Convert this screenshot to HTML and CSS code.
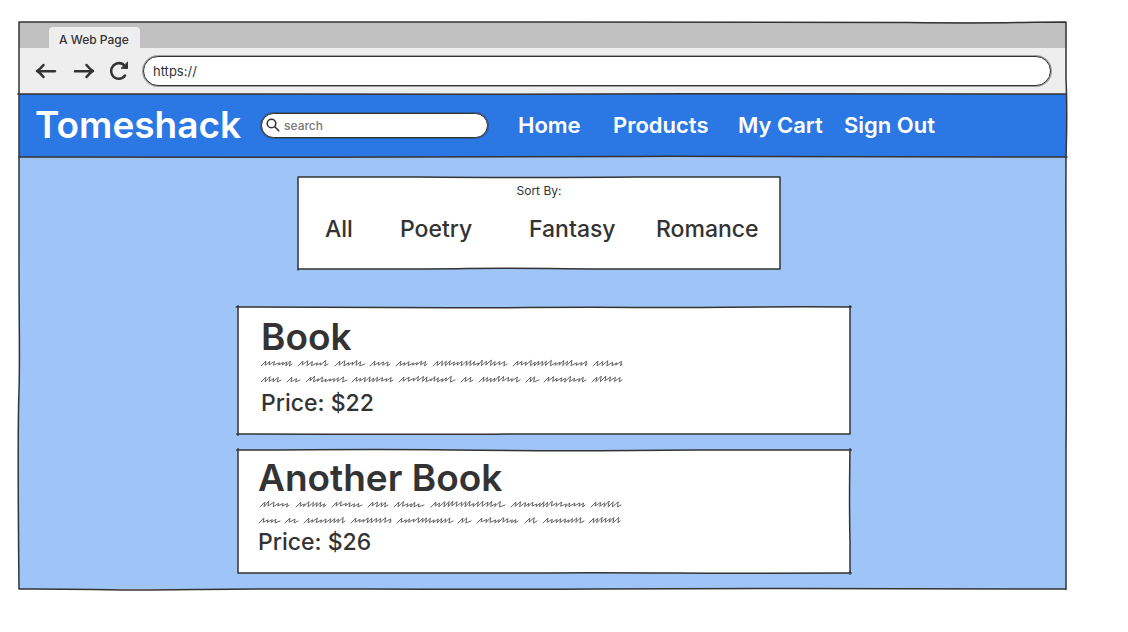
FILE: index.html
```html
<!DOCTYPE html>
<html lang="en">
<head>
<meta charset="utf-8">
<meta name="viewport" content="width=device-width, initial-scale=1">
<title>Tomeshack</title>
<link rel="stylesheet" href="styles.css">
</head>
<body>
<div class="window">
  <div class="tabs"><div class="tab">A Web Page</div></div>
  <div class="toolbar">
    <button class="tool" type="button" aria-label="Back"><svg width="22" height="18" viewBox="0 0 22 18"><path d="M20 9.3L2 9M8.500 3C6.500 5.500 4.500 7.500 2 9C4.500 10.500 6.500 12.500 8.500 15"/></svg></button>
    <button class="tool" type="button" aria-label="Forward"><svg width="22" height="18" viewBox="0 0 22 18"><path d="M2 9.300L20 9M13.500 3C15.500 5.500 17.500 7.500 20 9C17.500 10.500 15.500 12.500 13.500 15"/></svg></button>
    <button class="tool" type="button" aria-label="Reload"><svg width="20" height="20" viewBox="0 0 20 20"><path d="M16 14.500C13 19 5.500 19 3 13.500C1 9 3 4 7.500 2.500C11 1.500 14.500 3 16.500 6"/><path class="solid" d="M18.500 1.500L18.500 7.500L12.500 7.200Z"/></svg></button>
    <input class="address" type="text" aria-label="Address" value="https://">
  </div>
  <header class="header">
    <h1 class="brand">Tomeshack</h1>
    <label class="search">
      <svg width="14" height="14" viewBox="0 0 14 14" aria-hidden="true"><circle cx="5.500" cy="5.500" r="4.300"/><path d="M8.800 8.800L12.800 12.800"/></svg>
      <input type="search" placeholder="search" aria-label="Search">
    </label>
    <nav class="nav">
      <a href="#">Home</a><a href="#">Products</a><a href="#">My Cart</a><a href="#">Sign Out</a>
    </nav>
    <svg class="frame" viewBox="0 0 100 100" preserveAspectRatio="none" aria-hidden="true"><path d="M-.1 0L15 0C30 -1 42 1 55 0S75 0 100 0M0 100C15 100 25 101 37 100S55 100 62 99S80 100 100.100 100"/></svg>
  </header>
  <main class="main">
    <section class="filter">
      <h2 class="filter-title">Sort By:</h2>
      <div class="filter-links"><a href="#">All</a><a href="#">Poetry</a><a href="#">Fantasy</a><a href="#">Romance</a></div>
      <svg class="frame" viewBox="0 0 100 100" preserveAspectRatio="none" aria-hidden="true"><path d="M0 0L25 0C45 .8 60 .5 70 0L100 0M100 0L100 100M0 100C12 100 22 100.500 35 99.500S60 100.500 80 100L100 100M0 0L0 101"/></svg>
    </section>
    <article class="book">
      <h2 class="book-title">Book</h2>
      <svg class="scribble" width="364" height="28" viewBox="0 0 364 28" aria-hidden="true" data-rows="0-31 37-67 74-104 109-129 135-166 172-246 252-326 332-361|0-20 26-39 45-86 91-132 138-194 200-212 218-259 265-278 283-325 331-361"></svg>
      <p class="price">Price: $22</p>
      <svg class="frame" viewBox="0 0 100 100" preserveAspectRatio="none" aria-hidden="true"><path d="M-.3 0C15 0 25 0 35 .5S50 -.3 65 .3S80 -.6 100.200 0M100 -1L100 100M100 100C75 100 60 99.300 45 100S20 100 -.2 100M0 -1L0 101"/></svg>
    </article>
    <article class="book compact">
      <h2 class="book-title">Another Book</h2>
      <svg class="scribble" width="364" height="28" viewBox="0 0 364 28" aria-hidden="true" data-rows="2-31 38-68 74-104 110-130 136-166 173-247 253-327 333-363|1-22 27-40 46-87 93-133 139-195 200-213 219-260 267-279 285-326 331-362"></svg>
      <p class="price">Price: $26</p>
      <svg class="frame" viewBox="0 0 100 100" preserveAspectRatio="none" aria-hidden="true"><path d="M-.2 0C12 0 22 -.8 35 0S60 .8 75 0L100.200 0M100 -1C99.900 30 99.900 55 100 75L100 101M0 100L50 100C65 99.500 75 100.500 85 100.200L100.200 100M0 -1L0 100"/></svg>
    </article>
  </main>
  <svg class="frame" viewBox="0 0 100 100" preserveAspectRatio="none" aria-hidden="true"><path d="M0 0C20 0 35 .1 50 0S75 -.1 85 .1S95 0 100 0M100 0L100 10C100.100 14 100.100 18 100 24C99.950 45 100.100 60 100 75L100 100.100M100 100C80 100 72 99.800 55 100S25 99.800 17 100.100S7 99.900 0 100M0 0L0 40C0 55 .1 60 0 65S-.1 82 0 100"/></svg>
</div>
<script src="scribble.js"></script>
</body>
</html>
```
FILE: styles.css
```css
* { box-sizing: border-box; }
body {
  margin: 0;
  padding: 22px 62px 43px 19px;
  background: #fff;
  color: #333;
  font-family: Inter, "Open Sans", sans-serif;
}
h1, h2, p { margin: 0; font-weight: 500; }
a { color: inherit; text-decoration: none; }
svg { display: block; flex: none; fill: none; stroke: #333; stroke-linecap: round; stroke-linejoin: round; }
.window { position: relative; background: #eee; }
.frame {
  position: absolute;
  inset: 0;
  width: 100%;
  height: 100%;
  overflow: visible;
  pointer-events: none;
}
.frame path { vector-effect: non-scaling-stroke; stroke-width: 1.5; }
.tabs { display: flex; align-items: flex-end; height: 26px; padding-left: 30px; background: #c1c1c1; }
.tab {
  height: 21px;
  padding: 0 11px 0 10px;
  border-radius: 4px 4px 0 0;
  background: #eee;
  font-size: 12px;
  font-weight: 500;
  line-height: 25px;
}
.toolbar { display: flex; align-items: center; gap: 16px; height: 46px; padding: 0 15px 0 16px; }
.tool { padding: 0; border: 0; background: none; }
.tool svg { stroke-width: 2.5; }
.tool .solid { fill: #333; stroke-width: 1; }
.tool:nth-child(3) { margin: 0 -2px; }
.address {
  flex: 1;
  min-width: 0;
  height: 30px;
  padding: 0 9px;
  border: 1px solid #333;
  border-radius: 15px;
  box-shadow: 0 0 0 1px #3336;
  background: #fff;
  color: #333;
  font: 13px Inter, "Open Sans", sans-serif;
}
.header {
  position: relative;
  display: flex;
  align-items: center;
  height: 63px;
  padding: 0 16px 1px;
  background: #2b78e4;
  color: #fff;
}
.brand { flex: 0 0 226px; font-size: 37px; font-weight: 600; line-height: 48px; }
.search {
  display: flex;
  align-items: center;
  gap: 4px;
  width: 227px;
  height: 25px;
  margin-right: 30px;
  padding: 0 4px;
  border: 1px solid #333;
  border-radius: 13px;
  box-shadow: 0 0 0 1px #3336;
  background: #fff;
}
.search svg { stroke-width: 1.6; }
.search input {
  flex: 1;
  min-width: 0;
  padding: 0;
  border: 0;
  outline: 0;
  background: none;
  font: 500 12px Inter, "Open Sans", sans-serif;
}
.search input::placeholder { color: #777; }
.nav {
  display: grid;
  grid-template-columns: 95px 125px 106px auto;
  font-size: 22px;
  font-weight: 600;
  line-height: 32px;
  white-space: nowrap;
}
.main { padding: 20px 216px 16px 219px; background: #9fc4f8; }
.filter {
  position: relative;
  height: 92px;
  margin: 0 70px 38px 60px;
  padding: 4px 20px 0 20px;
  background: #fff;
}
.filter-title { font-size: 12px; font-weight: 400; line-height: 20px; text-align: center; }
.filter-links {
  display: grid;
  grid-template-columns: 75px 129px 127px auto;
  margin-top: 12px;
  padding-left: 7px;
  font-size: 23px;
  font-weight: 500;
  line-height: 32px;
  white-space: nowrap;
}
.book { position: relative; padding: 8px 23px 15px; background: #fff; }
.book + .book { margin-top: 16px; }
.book-title { font-size: 37px; font-weight: 600; line-height: 44px; }
.scribble { stroke: #666; stroke-width: 1; }
.price { font-size: 23px; line-height: 32px; }
.compact { padding: 6px 20px 16px; }
.compact .price { line-height: 29px; }
```
FILE: scribble.js
```js
// Draws handwriting-like placeholder words; data-rows lists start-end spans.
let seed = 7;
function next() {
  seed = (seed * 1103515245 + 12345) % 2147483648;
  return seed / 2147483648;
}
document.querySelectorAll(".scribble").forEach((svg) => {
  let d = "";
  svg.dataset.rows.split("|").forEach((row, i) => {
    const base = 7 + i * 16;
    row.split(" ").forEach((span) => {
      const [start, end] = span.split("-").map(Number);
      let x = start + 5;
      d += `M${start} ${base}L${x} ${base - 5}`;
      while (x < end - 5) {
        d += `L${(x - 1).toFixed(1)} ${(base - next()).toFixed(1)}`;
        x += 3.4 + next() * 1.8;
        d += `L${x.toFixed(1)} ${(base - 3 - next() * 3).toFixed(1)}`;
      }
      d += `L${(x - 1).toFixed(1)} ${base}L${end} ${base - 2}`;
    });
  });
  const path = document.createElementNS("http://www.w3.org/2000/svg", "path");
  path.setAttribute("d", d);
  svg.append(path);
});
```
